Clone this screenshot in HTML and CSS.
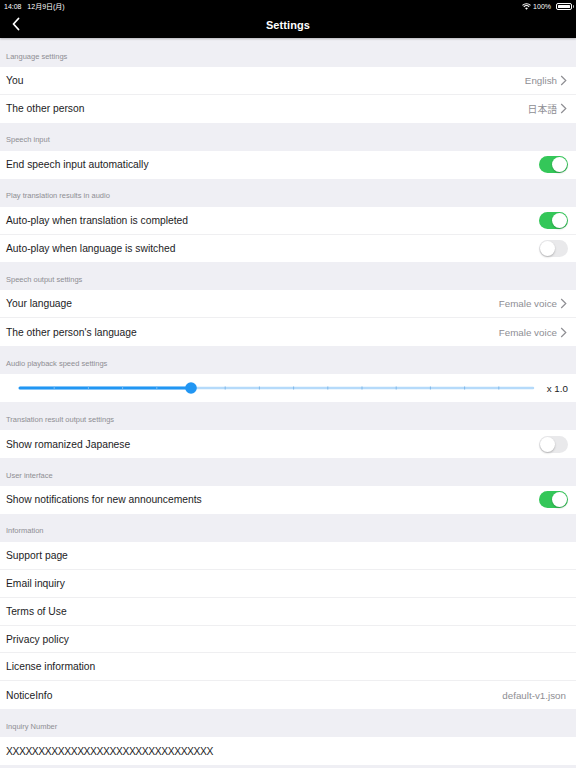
FILE: index.html
```html
<!DOCTYPE html>
<html>
<head>
<meta charset="utf-8">
<title>Settings</title>
<link rel="stylesheet" href="styles.css">
</head>
<body>
<header class="topbar">
  <div class="status">
    <span class="time">14:08&nbsp;&nbsp;&nbsp;12月9日(月)</span>
    <span class="status-right">
      <svg class="wifi" width="9" height="7" viewBox="0 0 18 14"><path d="M9 13.5 L6.2 10.4 A4.2 4.2 0 0 1 11.8 10.4 Z" fill="#fff"/><path d="M3.6 7.6 A7.8 7.8 0 0 1 14.4 7.6" stroke="#fff" stroke-width="2.2" fill="none"/><path d="M1 4.6 A11.6 11.6 0 0 1 17 4.6" stroke="#fff" stroke-width="2.2" fill="none"/></svg>
      <span class="pct">100%</span>
      <span class="battery"><span class="battery-fill"></span></span>
    </span>
  </div>
  <div class="nav">
    <svg class="back" width="10" height="14" viewBox="0 0 10 14"><path d="M7.5 1.5 L2.5 7 L7.5 12.5" stroke="#fff" stroke-width="1.8" fill="none" stroke-linecap="round" stroke-linejoin="round"/></svg>
    <h1 class="title">Settings</h1>
  </div>
</header>

<main class="list">
  <div class="sec-head">Language settings</div>
  <div class="group">
    <div class="row"><span class="label">You</span><span class="value">English<svg class="chev" width="7" height="11" viewBox="0 0 7 11"><path d="M1.2 1 L5.8 5.5 L1.2 10" stroke="#8e8e93" stroke-width="1.2" fill="none"/></svg></span></div>
    <div class="row"><span class="label">The other person</span><span class="value">日本語<svg class="chev" width="7" height="11" viewBox="0 0 7 11"><path d="M1.2 1 L5.8 5.5 L1.2 10" stroke="#8e8e93" stroke-width="1.2" fill="none"/></svg></span></div>
  </div>

  <div class="sec-head">Speech input</div>
  <div class="group">
    <div class="row"><span class="label">End speech input automatically</span><span class="toggle on"><span class="knob"></span></span></div>
  </div>

  <div class="sec-head">Play translation results in audio</div>
  <div class="group">
    <div class="row"><span class="label">Auto-play when translation is completed</span><span class="toggle on"><span class="knob"></span></span></div>
    <div class="row"><span class="label">Auto-play when language is switched</span><span class="toggle"><span class="knob"></span></span></div>
  </div>

  <div class="sec-head">Speech output settings</div>
  <div class="group">
    <div class="row"><span class="label">Your language</span><span class="value">Female voice<svg class="chev" width="7" height="11" viewBox="0 0 7 11"><path d="M1.2 1 L5.8 5.5 L1.2 10" stroke="#8e8e93" stroke-width="1.2" fill="none"/></svg></span></div>
    <div class="row"><span class="label">The other person's language</span><span class="value">Female voice<svg class="chev" width="7" height="11" viewBox="0 0 7 11"><path d="M1.2 1 L5.8 5.5 L1.2 10" stroke="#8e8e93" stroke-width="1.2" fill="none"/></svg></span></div>
  </div>

  <div class="sec-head">Audio playback speed settings</div>
  <div class="group">
    <div class="row slider-row">
      <div class="slider">
        <svg width="520" height="14" viewBox="0 0 520 14">
          <line x1="3" y1="7" x2="516" y2="7" stroke="#b5dafa" stroke-width="2.5" stroke-linecap="round"/>
          <line x1="3" y1="7" x2="174" y2="7" stroke="#2196f3" stroke-width="3" stroke-linecap="round"/>
          <g stroke="#7cbcf2" stroke-width="1">
            <line x1="37.2" y1="5.5" x2="37.2" y2="8.5"/><line x1="71.4" y1="5.5" x2="71.4" y2="8.5"/><line x1="105.6" y1="5.5" x2="105.6" y2="8.5"/><line x1="139.8" y1="5.5" x2="139.8" y2="8.5"/>
          </g>
          <g stroke="#7fb8ea" stroke-width="1">
            <line x1="208.2" y1="5.5" x2="208.2" y2="8.5"/><line x1="242.4" y1="5.5" x2="242.4" y2="8.5"/><line x1="276.6" y1="5.5" x2="276.6" y2="8.5"/><line x1="310.8" y1="5.5" x2="310.8" y2="8.5"/><line x1="345" y1="5.5" x2="345" y2="8.5"/><line x1="379.2" y1="5.5" x2="379.2" y2="8.5"/><line x1="413.4" y1="5.5" x2="413.4" y2="8.5"/><line x1="447.6" y1="5.5" x2="447.6" y2="8.5"/><line x1="481.8" y1="5.5" x2="481.8" y2="8.5"/>
          </g>
          <circle cx="174" cy="7" r="5.8" fill="#2196f3"/>
        </svg>
      </div>
      <span class="speed">x 1.0</span>
    </div>
  </div>

  <div class="sec-head">Translation result output settings</div>
  <div class="group">
    <div class="row"><span class="label">Show romanized Japanese</span><span class="toggle"><span class="knob"></span></span></div>
  </div>

  <div class="sec-head">User interface</div>
  <div class="group">
    <div class="row"><span class="label">Show notifications for new announcements</span><span class="toggle on"><span class="knob"></span></span></div>
  </div>

  <div class="sec-head">Information</div>
  <div class="group">
    <div class="row"><span class="label">Support page</span></div>
    <div class="row"><span class="label">Email inquiry</span></div>
    <div class="row"><span class="label">Terms of Use</span></div>
    <div class="row"><span class="label">Privacy policy</span></div>
    <div class="row"><span class="label">License information</span></div>
    <div class="row"><span class="label">NoticeInfo</span><span class="value plain">default-v1.json</span></div>
  </div>

  <div class="sec-head">Inquiry Number</div>
  <div class="group">
    <div class="row"><span class="label mono-x">XXXXXXXXXXXXXXXXXXXXXXXXXXXXXXXX</span></div>
  </div>
</main>
</body>
</html>
```

FILE: styles.css
```css
* { box-sizing: border-box; margin: 0; padding: 0; }

html, body {
  width: 576px;
  height: 768px;
  overflow: hidden;
  background: #efeff4;
  font-family: "Liberation Sans", Arial, "Noto Sans CJK JP", sans-serif;
  color: #1c1c1e;
}

.topbar {
  background: #000;
  height: 38px;
  color: #fff;
  box-shadow: 0 1px 2px rgba(0,0,0,0.25);
  position: relative;
  z-index: 1;
}

.status {
  height: 12px;
  display: flex;
  justify-content: space-between;
  align-items: center;
  padding: 0 4px 0 4px;
  font-size: 7px;
  font-family: "Liberation Sans", "Noto Sans CJK JP", sans-serif;
}

.status-right {
  display: flex;
  align-items: center;
  gap: 2px;
}

.pct { margin-right: 3px; }

.battery {
  width: 16px;
  height: 7px;
  border: 1px solid #fff;
  border-radius: 2px;
  padding: 1px;
  display: flex;
  position: relative;
}
.battery::after {
  content: "";
  position: absolute;
  right: -3px;
  top: 1.5px;
  width: 1.5px;
  height: 2.5px;
  background: #bbb;
  border-radius: 0 1px 1px 0;
}
.battery-fill {
  flex: 1;
  background: #fff;
  border-radius: 0.5px;
}

.nav {
  height: 26px;
  display: flex;
  align-items: center;
  justify-content: center;
  position: relative;
}

.back {
  position: absolute;
  left: 11px;
  top: 5px;
}

.title {
  font-size: 11px;
  font-weight: bold;
  letter-spacing: 0.1px;
  margin-top: 0;
}

.list {
  padding-top: 1px;
}

.sec-head {
  height: 28px;
  display: flex;
  align-items: center;
  padding: 6px 6px 0 6px;
  font-size: 7.5px;
  color: #8e8e93;
}

.group {
  background: #fff;
}

.row {
  height: 27.9px;
  display: flex;
  align-items: center;
  justify-content: space-between;
  padding: 0 8px 0 6px;
  border-bottom: 1px solid #efeff1;
  font-size: 10.3px;
}
.row:last-child { border-bottom: none; }

.label.mono-x { letter-spacing: -0.4px; }

.value {
  display: flex;
  align-items: center;
  gap: 3px;
  color: #8e8e93;
  font-size: 9.8px;
  margin-right: 1px;
}
.value.plain { margin-right: 2px; }

.toggle {
  width: 29px;
  height: 17px;
  border-radius: 9px;
  background: #e9e9eb;
  position: relative;
  display: block;
}
.toggle .knob {
  position: absolute;
  top: 1px;
  left: 1px;
  width: 15px;
  height: 15px;
  border-radius: 50%;
  background: #fff;
  box-shadow: 0 1px 2px rgba(0,0,0,0.25);
}
.toggle.on { background: #34c759; }
.toggle.on .knob { left: 13px; }

.slider-row {
  padding-left: 17px;
  padding-right: 8px;
}
.slider {
  display: flex;
  align-items: center;
}
.speed {
  font-size: 9.8px;
  color: #1c1c1e;
}
```
